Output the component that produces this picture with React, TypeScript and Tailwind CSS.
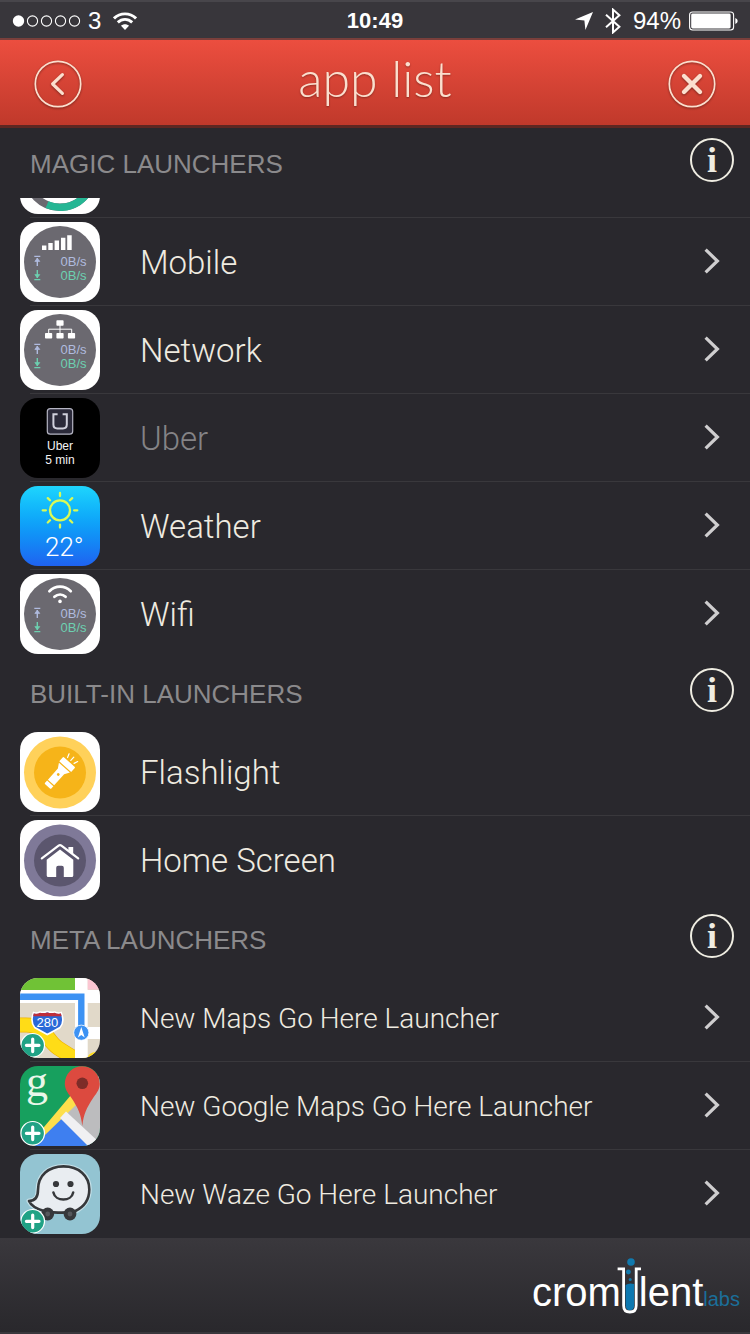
import type { ReactNode } from 'react';

const sans = "font-['Liberation_Sans',Arial,sans-serif]";
const light = "font-[Roboto,'Liberation_Sans',sans-serif] font-light";

function IconBase({ children, className }: { children: ReactNode; className: string }) {
  return (
    <svg viewBox="0 0 80 80" className={`w-20 h-20 shrink-0 rounded-[18px] ${className}`} aria-hidden="true">
      {children}
    </svg>
  );
}

function SpeedIcon({ children }: { children: ReactNode }) {
  return (
    <IconBase className={`bg-white ${sans}`}>
      <circle cx="40" cy="40" r="36" fill="#6b6970" />
      {children}
      <g stroke="#b0bbdf" strokeWidth="1.4" fill="none">
        <path d="M14.3 34.4h6M17.3 36v8" />
        <path d="M14.8 39.4l2.5-3.2 2.5 3.2z" fill="#b0bbdf" strokeWidth="0.7" />
      </g>
      <g stroke="#6dd0b0" strokeWidth="1.4" fill="none">
        <path d="M14.3 57.6h6M17.3 48V56" />
        <path d="M14.8 52.6l2.5 3.2 2.5-3.2z" fill="#6dd0b0" strokeWidth="0.7" />
      </g>
      <text x="66.5" y="44" fontSize="13" textAnchor="end" fill="#b0bbdf">0B/s</text>
      <text x="66.5" y="58" fontSize="13" textAnchor="end" fill="#6dd0b0">0B/s</text>
    </IconBase>
  );
}

function BatteryIcon() {
  return (
    <IconBase className="bg-white">
      <circle cx="40" cy="40" r="33.3" fill="none" stroke="#6b6970" strokeWidth="7.4" />
      <path d="M27 70.7A33.3 33.3 0 0 0 73.3 40" fill="none" stroke="#25b694" strokeWidth="7.4" />
    </IconBase>
  );
}

function MobileIcon() {
  return (
    <SpeedIcon>
      <path d="M22 23.4h4.4V28H22zM28.3 21h4.4v7h-4.4zM34.6 18.4H39V28h-4.4zM41 15.7h4.4V28H41zM47.2 13.2h4.5V28h-4.5z" fill="#fff" />
    </SpeedIcon>
  );
}

function NetworkIcon() {
  return (
    <SpeedIcon>
      <path d="M40 15v9M28.7 24v-4.8h23V24" fill="none" stroke="#fff" strokeWidth="1" />
      <g fill="#fff">
        <rect x="36.4" y="10.3" width="7.2" height="5.5" rx="0.8" />
        <rect x="25" y="23" width="7.2" height="5.5" rx="0.8" />
        <rect x="36.4" y="23" width="7.2" height="5.5" rx="0.8" />
        <rect x="47.9" y="23" width="7.2" height="5.5" rx="0.8" />
      </g>
    </SpeedIcon>
  );
}

function WifiIcon() {
  return (
    <SpeedIcon>
      <g fill="none" stroke="#fff" strokeWidth="2.7" strokeLinecap="round">
        <path d="M29.4 17.2C35.6 11.2 44.4 11.2 50.8 17.2" />
        <path d="M34.4 22.8C37.8 19.8 42.4 19.8 45.6 22.8" />
      </g>
      <circle cx="40" cy="27.4" r="1.8" fill="#fff" />
    </SpeedIcon>
  );
}

function UberIcon() {
  return (
    <IconBase className={`bg-black ${sans}`}>
      <rect x="27.3" y="10.6" width="25.4" height="25.6" rx="3" fill="#2b2a3a" stroke="#b5b5c3" strokeWidth="1.2" />
      <path d="M37.6 16.3H33.4V26.5Q33.4 30.4 37.3 30.4H42.9Q46.8 30.4 46.8 26.5V16.3H42.6" fill="none" stroke="#d0d0dc" strokeWidth="2" />
      <text x="40" y="52" fontSize="12" textAnchor="middle" fill="#f4f4f4">Uber</text>
      <text x="40" y="66" fontSize="12" textAnchor="middle" fill="#f4f4f4">5 min</text>
    </IconBase>
  );
}

function WeatherIcon() {
  return (
    <IconBase className={`bg-gradient-to-b from-[#1fd5fd] to-[#1f62f0] ${light}`}>
      <g fill="none" stroke="#d9fa55" strokeWidth="2.3" strokeLinecap="round">
        <circle cx="40" cy="24.3" r="10" />
        <path d="M40 7v3M40 38.6v3M22.7 24.3h3.2M54.1 24.3h3.2M27.8 12.1l2.2 2.2M50 34.3l2.2 2.2M27.8 36.5l2.2-2.2M50 14.3l2.2-2.2" />
      </g>
      <text x="25" y="70" fontSize="26" fill="#fff">22°</text>
    </IconBase>
  );
}

function FlashlightIcon() {
  return (
    <IconBase className="bg-white">
      <circle cx="40" cy="40.5" r="36" fill="#ffd15a" />
      <circle cx="40" cy="40.5" r="26" fill="#f6b419" />
      <g transform="translate(40 40.5) rotate(42)">
        <path d="M-7-14H7Q8.2-14 8-12.5V-7.8H-8V-12.5Q-8.2-14-7-14zM-7.4-6.6H7.4L4.2-1.5V13.4H-4.2V-1.5zM-4.2 14.6H4.2V17.6Q4.2 18.6 3.2 18.6H-3.2Q-4.2 18.6-4.2 17.6z" fill="#fff" />
        <path d="M0-16.2V-20.6M-4.4-16.2L-5.8-20M4.4-16.2L5.8-20" stroke="#fff" strokeWidth="1.2" strokeLinecap="round" />
        <circle cy="2.6" r="1.4" fill="#f6b419" />
      </g>
    </IconBase>
  );
}

function HomeIcon() {
  return (
    <IconBase className="bg-white">
      <circle cx="40" cy="40.5" r="36" fill="#7f7998" />
      <circle cx="40" cy="40.5" r="26" fill="#5b566e" />
      <path d="M26.7 39.8L40 29.6 53.3 39.8V55.4Q53.3 57 51.7 57H43.8V47.7Q43.8 45.7 41.8 45.7H38.2Q36.2 45.7 36.2 47.7V57H28.3Q26.7 57 26.7 55.4z" fill="#fff" />
      <path d="M21.8 38.4L38.6 25.7Q40 24.7 41.4 25.7L58.2 38.4" fill="none" stroke="#5b566e" strokeWidth="4.6" />
      <path d="M48.4 27H53.2v8l-4.8-3.6z" fill="#fff" />
      <path d="M21.8 38.4L38.6 25.7Q40 24.7 41.4 25.7L58.2 38.4" fill="none" stroke="#fff" strokeWidth="2.2" strokeLinecap="round" />
    </IconBase>
  );
}

function PlusBadge() {
  return (
    <g>
      <circle cx="12.7" cy="67.3" r="11.8" fill="#20a285" stroke="#fff" strokeWidth="1.2" />
      <path d="M12.7 61V73.6M6.4 67.3H19" stroke="#fff" strokeWidth="3.2" strokeLinecap="round" />
    </g>
  );
}

function MapsIcon() {
  return (
    <IconBase className={`bg-[#e1d9c9] ${sans}`}>
      <path d="M-4 47H6C26 47 26 62 38 70S56 80 62 86" fill="none" stroke="#f0b400" strokeWidth="15" />
      <path d="M-4 47H6C26 47 26 62 38 70S56 80 62 86" fill="none" stroke="#ffdc17" strokeWidth="13.6" />
      <path d="M68 78Q72 73 80 74V80H68z" fill="#ffdc17" />
      <path d="M0 12H80V25H0zM55 0H67.7V80H55zM55 49H80V61H55z" fill="#fff" />
      <path d="M0 0H55V12H0z" fill="#70c236" />
      <path d="M67.7 0H80V11.5H67.7z" fill="#fbc6d2" />
      <path d="M0 18.8H61.3V50" fill="none" stroke="#3c92f3" strokeWidth="6.4" />
      <circle cx="61.3" cy="54.7" r="7.6" fill="#3c92f3" stroke="#fff" strokeWidth="0.8" />
      <path d="M61.3 49l3.4 10.4-3.4-2.4-3.4 2.4z" fill="#fff" />
      <path d="M13.5 34.5Q17 36 20 34Q24 35 27.3 33.6Q31 35 34.6 34Q38 36 41.2 34.5Q45 44 40 49.5Q34 53 27.3 56.5Q21 53 14.7 49.5Q10 44 13.5 34.5z" fill="#2a69d8" stroke="#fff" strokeWidth="1.6" />
      <path d="M13.8 35.2Q17 36.4 20 34.8Q24 35.6 27.3 34.4Q31 35.6 34.6 34.8Q38 36.4 40.9 35.2L41.6 38.2H13.1z" fill="#bf2e3a" />
      <text x="27.3" y="49" fontSize="13" textAnchor="middle" fill="#fff">280</text>
      <PlusBadge />
    </IconBase>
  );
}

function GoogleMapsIcon() {
  return (
    <IconBase className="bg-[#17a05e] overflow-visible">
      <defs>
        <clipPath id="gmaps">
          <rect width="80" height="80" rx="18" />
        </clipPath>
      </defs>
      <g clipPath="url(#gmaps)">
        <path d="M46 47L80 8V80H66z" fill="#bcbcbe" />
        <path d="M40 50L10 80H72z" fill="#3e7ff0" />
        <path d="M8 80V72L24 61 51 29 58 37 25 69 14 80z" fill="#fddf4b" />
        <path d="M40 52L46 45.5 80 77V82H70z" fill="#f0f0f2" />
        <path d="M62.3 60C61 48 58 42 51.5 32C47 26 44.8 22.5 44.8 17.5A17.5 17.2 0 0 1 79.8 17.5C79.8 22.5 77.6 26 73.1 32C66.6 42 63.6 48 62.3 60z" fill="#dc4a3f" />
        <circle cx="62.3" cy="17.3" r="5.8" fill="#7d2c28" />
      </g>
      <text x="6" y="30" fontSize="44" fill="#e9f7e9" className="font-['Liberation_Serif',serif]">g</text>
      <PlusBadge />
    </IconBase>
  );
}

function WazeIcon() {
  return (
    <IconBase className="bg-[#93c4d2]">
      <path d="M18 36C18 21 29 12.4 43.5 12.4C58.5 12.4 69.3 21.5 69.3 35.5C69.3 45 64 53 55 57.2L24 57C17 55 11 51.5 9 47C15 47 18 44 18 36z" fill="#e9edf1" stroke="#c5e0e8" strokeWidth="5" strokeLinejoin="round" />
      <path d="M18 36C18 21 29 12.4 43.5 12.4C58.5 12.4 69.3 21.5 69.3 35.5C69.3 45 64 53 55 57.2Q48 59 38 58.6T24 57C17 55 11 51.5 9 47C15 47 18 44 18 36z" fill="#e9edf1" stroke="#36383b" strokeWidth="2.6" strokeLinejoin="round" />
      <g fill="#36383b">
        <circle cx="27.7" cy="60" r="6.4" />
        <circle cx="50" cy="60" r="6.4" />
        <circle cx="36" cy="30" r="3.1" />
        <circle cx="50.5" cy="30" r="3.1" />
      </g>
      <circle cx="27.7" cy="60" r="2.4" fill="#56585c" />
      <circle cx="50" cy="60" r="2.4" fill="#56585c" />
      <path d="M33.4 38.4C35.5 48 51.3 48 53.2 38.4" fill="none" stroke="#36383b" strokeWidth="2.5" strokeLinecap="round" />
      <PlusBadge />
    </IconBase>
  );
}

function StatusBar() {
  return (
    <div className={`h-[38px] border-t-2 border-[#48464b] bg-[#38363b] grid grid-cols-3 items-center px-3 pt-0.5 text-2xl leading-8 text-white ${sans}`}>
      <div className="flex items-center">
        <svg viewBox="0 0 70 14" className="w-[70px] h-3.5" aria-hidden="true">
          <circle cx="6.5" cy="7" r="5.7" fill="#fff" />
          <g fill="none" stroke="#fff" strokeWidth="1.1">
            <circle cx="20.5" cy="7" r="5.1" />
            <circle cx="34.5" cy="7" r="5.1" />
            <circle cx="48.5" cy="7" r="5.1" />
            <circle cx="62.5" cy="7" r="5.1" />
          </g>
        </svg>
        <span className="ml-1.5">3</span>
        <svg viewBox="0 0 24 18" className="w-6 h-[18px] ml-3" aria-hidden="true">
          <g fill="none" stroke="#fff" strokeWidth="2.9">
            <path d="M1 6.4C7.2.3 16.8.3 23 6.4" />
            <path d="M4.8 10.4C9 6.4 15 6.4 19.2 10.4" />
          </g>
          <path d="M12 18l-4-4.2c2.4-2 5.6-2 8 0z" fill="#fff" />
        </svg>
      </div>
      <div className="text-center text-[22px] font-bold">10:49</div>
      <div className="flex items-center justify-end">
        <svg viewBox="0 0 18 18" className="w-[18px] h-[18px] mr-3" aria-hidden="true">
          <path d="M18 0L10.4 18 9.4 8.6 0 7.6z" fill="#fff" />
        </svg>
        <svg viewBox="0 0 16 26" className="w-4 h-[26px] mr-3" aria-hidden="true">
          <path d="M1 6.8L14.4 18.8 8 24.4V1.6L14.4 7.2 1 19.2" fill="none" stroke="#fff" strokeWidth="2" />
        </svg>
        <span>94%</span>
        <svg viewBox="0 0 49 20" className="w-[49px] h-5 ml-2" aria-hidden="true">
          <rect x="0.6" y="1" width="44" height="18" rx="3" fill="none" stroke="#fff" strokeWidth="1.1" />
          <rect x="2.2" y="2.6" width="39.4" height="14.8" rx="1.4" fill="#fff" />
          <path d="M46.3 7v6q2.4-.8 2.4-3T46.3 7z" fill="#fff" />
        </svg>
      </div>
    </div>
  );
}

function Header() {
  return (
    <header className="h-[90px] flex items-center justify-between px-[34px] pt-0.5 border-t-2 border-b-[3px] border-t-[#7a3f3b] border-b-[#5d2722] bg-gradient-to-b from-[#ec4e3f] to-[#c0392b] text-[#fbdfce]">
      <button aria-label="Back" className="w-12 h-12">
        <svg viewBox="0 0 48 48" fill="none" stroke="currentColor" className="w-12 h-12 drop-shadow-[0_1px_1px_#00000066]">
          <circle cx="24" cy="24" r="22.7" strokeWidth="1.7" />
          <path d="M28.4 14.6L18.6 24l9.8 9.4" strokeWidth="3.2" strokeLinecap="round" strokeLinejoin="round" />
        </svg>
      </button>
      <h1 className="font-[Lato,sans-serif] font-light text-[50px] leading-none pb-3 [text-shadow:0_1px_2px_#00000055]">app list</h1>
      <button aria-label="Close" className="w-12 h-12">
        <svg viewBox="0 0 48 48" fill="none" stroke="currentColor" className="w-12 h-12 drop-shadow-[0_1px_1px_#00000066]">
          <circle cx="24" cy="24" r="22.7" strokeWidth="1.7" />
          <path d="M16 16l16 16M32 16L16 32" strokeWidth="4.4" strokeLinecap="round" />
        </svg>
      </button>
    </header>
  );
}

function SectionHeader({ title }: { title: string }) {
  return (
    <div className="h-[70px] flex items-start justify-between pl-[30px] pr-4 pt-2.5">
      <h2 className={`pt-2.5 text-[26px] leading-8 text-[#8b8a8c] ${sans}`}>{title}</h2>
      <button
        aria-label={`About ${title.toLowerCase()}`}
        className="w-11 h-11 rounded-full border-2 border-[#efede2] text-[#efede2] font-['Liberation_Serif',serif] font-bold text-4xl leading-9"
      >
        i
      </button>
    </div>
  );
}

type RowProps = {
  icon: ReactNode;
  label: string;
  small?: boolean;
  muted?: boolean;
  chevron?: boolean;
  last?: boolean;
};

function Row({ icon, label, small, muted, chevron = true, last }: RowProps) {
  return (
    <li className="relative">
      <button className="w-full h-[88px] flex items-center pl-5 pr-[30px] text-left">
        {icon}
        <span
          className={`flex-1 ml-10 pt-0.5 ${light} ${small ? 'text-[28px]' : 'text-[33px]'} ${muted ? 'text-[#848386]' : 'text-[#efebe0]'}`}
        >
          {label}
        </span>
        {chevron && (
          <svg viewBox="0 0 16 26" className="w-4 h-[26px] mb-0.5" aria-hidden="true">
            <path d="M1.6 1.6L13.4 13 1.6 24.4" fill="none" stroke="#cfcecf" strokeWidth="3.2" />
          </svg>
        )}
      </button>
      {!last && <div className="absolute bottom-0 left-[30px] right-0 h-px bg-[#39383c]" />}
    </li>
  );
}

function Footer() {
  return (
    <footer className="h-24 flex items-end justify-end pr-2.5 pb-3 border-b-2 border-[#39373c] bg-gradient-to-b from-[#3a383d] to-[#29282c]">
      <div className={`flex items-baseline text-[40px] leading-[56px] text-white ${sans}`}>
        <span>crom</span>
        <svg viewBox="0 0 24 64" className="w-6 h-16 -mt-2 -ml-1 -mr-0.5 self-start" aria-hidden="true">
          <path d="M8.6 29Q12 26.4 17.2 28V49Q17.2 54.4 12.9 54.4T8.6 49z" fill="#0d78b0" />
          <path d="M.6 12.8H6.6V49.4Q6.6 56 12.9 56T19.2 49.4V12.8H24" fill="none" stroke="#fff" strokeWidth="2.8" />
          <g fill="#1179ad">
            <circle cx="14" cy="6" r="3.8" />
            <circle cx="11.4" cy="16" r="2.4" />
            <circle cx="13.2" cy="23.4" r="1.5" />
          </g>
        </svg>
        <span>lent</span>
        <span className="text-xl text-[#1b6f9a]">labs</span>
      </div>
    </footer>
  );
}

export default function App() {
  return (
    <div className="min-h-screen flex flex-col bg-[#29282d]">
      <StatusBar />
      <Header />
      <main className="flex-1">
        <SectionHeader title="MAGIC LAUNCHERS" />
        {/* row scrolled mostly under the section header */}
        <div className="relative h-5 overflow-hidden flex flex-col justify-end pl-5 pb-1">
          <BatteryIcon />
          <div className="absolute bottom-0 left-[30px] right-0 h-px bg-[#39383c]" />
        </div>
        <ul>
          <Row icon={<MobileIcon />} label="Mobile" />
          <Row icon={<NetworkIcon />} label="Network" />
          <Row icon={<UberIcon />} label="Uber" muted />
          <Row icon={<WeatherIcon />} label="Weather" />
          <Row icon={<WifiIcon />} label="Wifi" last />
        </ul>
        <SectionHeader title="BUILT-IN LAUNCHERS" />
        <ul>
          <Row icon={<FlashlightIcon />} label="Flashlight" chevron={false} />
          <Row icon={<HomeIcon />} label="Home Screen" chevron={false} last />
        </ul>
        <SectionHeader title="META LAUNCHERS" />
        <ul>
          <Row icon={<MapsIcon />} label="New Maps Go Here Launcher" small />
          <Row icon={<GoogleMapsIcon />} label="New Google Maps Go Here Launcher" small />
          <Row icon={<WazeIcon />} label="New Waze Go Here Launcher" small last />
        </ul>
      </main>
      <Footer />
    </div>
  );
}
